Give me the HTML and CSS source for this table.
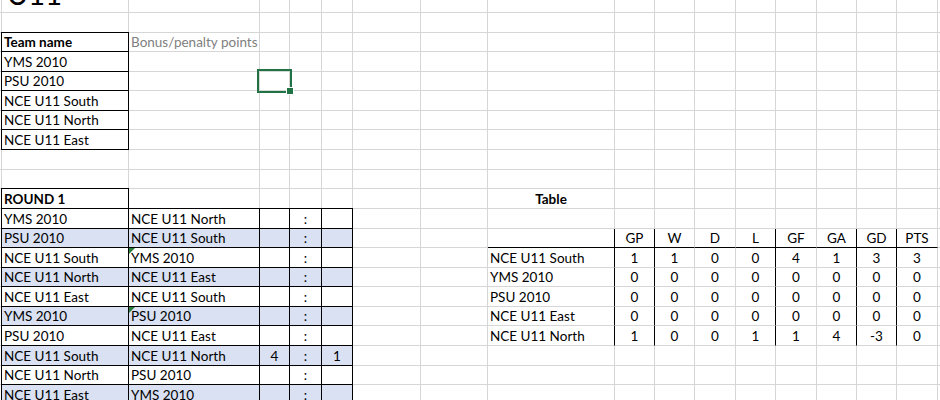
FILE: index.html
```html
<!DOCTYPE html>
<html lang="en">
<head>
<meta charset="utf-8">
<title>U11</title>
<link rel="stylesheet" href="styles.css">
</head>
<body>
<div class="sheet">
<!-- row 1 -->
<div></div><div class="title">U11</div><div></div><div></div><div></div><div></div><div></div><div></div><div></div><div></div><div></div><div></div><div></div><div></div><div></div><div></div><div></div><div></div>
<!-- row 2 -->
<div></div><div></div><div></div><div></div><div></div><div></div><div></div><div></div><div></div><div></div><div></div><div></div><div></div><div></div><div></div><div></div><div></div><div></div>
<!-- row 3 -->
<div></div><div class="bx b">Team name</div><div class="muted">Bonus/penalty points</div><div></div><div></div><div></div><div></div><div></div><div></div><div></div><div></div><div></div><div></div><div></div><div></div><div></div><div></div><div></div>
<!-- row 4 -->
<div></div><div class="bx">YMS 2010</div><div></div><div></div><div></div><div></div><div></div><div></div><div></div><div></div><div></div><div></div><div></div><div></div><div></div><div></div><div></div><div></div>
<!-- row 5 -->
<div></div><div class="bx">PSU 2010</div><div></div><div class="sel"></div><div></div><div></div><div></div><div></div><div></div><div></div><div></div><div></div><div></div><div></div><div></div><div></div><div></div><div></div>
<!-- row 6 -->
<div></div><div class="bx">NCE U11 South</div><div></div><div></div><div></div><div></div><div></div><div></div><div></div><div></div><div></div><div></div><div></div><div></div><div></div><div></div><div></div><div></div>
<!-- row 7 -->
<div></div><div class="bx">NCE U11 North</div><div></div><div></div><div></div><div></div><div></div><div></div><div></div><div></div><div></div><div></div><div></div><div></div><div></div><div></div><div></div><div></div>
<!-- row 8 -->
<div></div><div class="bx">NCE U11 East</div><div></div><div></div><div></div><div></div><div></div><div></div><div></div><div></div><div></div><div></div><div></div><div></div><div></div><div></div><div></div><div></div>
<!-- row 9 -->
<div></div><div></div><div></div><div></div><div></div><div></div><div></div><div></div><div></div><div></div><div></div><div></div><div></div><div></div><div></div><div></div><div></div><div></div>
<!-- row 10 -->
<div></div><div></div><div></div><div></div><div></div><div></div><div></div><div></div><div></div><div></div><div></div><div></div><div></div><div></div><div></div><div></div><div></div><div></div>
<!-- row 11 -->
<div></div><div class="bx b">ROUND 1</div><div></div><div></div><div></div><div></div><div></div><div></div><div class="c b">Table</div><div></div><div></div><div></div><div></div><div></div><div></div><div></div><div></div><div></div>
<!-- row 12 -->
<div></div><div class="bx">YMS 2010</div><div class="bx">NCE U11 North</div><div class="bx"></div><div class="bx c">:</div><div class="bx"></div><div></div><div></div><div></div><div></div><div></div><div></div><div></div><div></div><div></div><div></div><div></div><div></div>
<!-- row 13 -->
<div></div><div class="bx alt">PSU 2010</div><div class="bx alt">NCE U11 South</div><div class="bx alt"></div><div class="bx alt c">:</div><div class="bx alt"></div><div></div><div></div><div class="bb"></div><div class="bl bb c">GP</div><div class="bl bb c">W</div><div class="bb c">D</div><div class="bb c">L</div><div class="bl bb c">GF</div><div class="bb c">GA</div><div class="bl bb c">GD</div><div class="bl bb c">PTS</div><div></div>
<!-- row 14 -->
<div></div><div class="bx">NCE U11 South</div><div class="bx note">YMS 2010</div><div class="bx"></div><div class="bx c">:</div><div class="bx"></div><div></div><div></div><div>NCE U11 South</div><div class="bl c">1</div><div class="bl c">1</div><div class="c">0</div><div class="c">0</div><div class="bl c">4</div><div class="c">1</div><div class="bl c">3</div><div class="bl c">3</div><div></div>
<!-- row 15 -->
<div></div><div class="bx alt">NCE U11 North</div><div class="bx alt">NCE U11 East</div><div class="bx alt"></div><div class="bx alt c">:</div><div class="bx alt"></div><div></div><div></div><div>YMS 2010</div><div class="bl c">0</div><div class="bl c">0</div><div class="c">0</div><div class="c">0</div><div class="bl c">0</div><div class="c">0</div><div class="bl c">0</div><div class="bl c">0</div><div></div>
<!-- row 16 -->
<div></div><div class="bx">NCE U11 East</div><div class="bx">NCE U11 South</div><div class="bx"></div><div class="bx c">:</div><div class="bx"></div><div></div><div></div><div>PSU 2010</div><div class="bl c">0</div><div class="bl c">0</div><div class="c">0</div><div class="c">0</div><div class="bl c">0</div><div class="c">0</div><div class="bl c">0</div><div class="bl c">0</div><div></div>
<!-- row 17 -->
<div></div><div class="bx alt">YMS 2010</div><div class="bx alt note">PSU 2010</div><div class="bx alt"></div><div class="bx alt c">:</div><div class="bx alt"></div><div></div><div></div><div>NCE U11 East</div><div class="bl c">0</div><div class="bl c">0</div><div class="c">0</div><div class="c">0</div><div class="bl c">0</div><div class="c">0</div><div class="bl c">0</div><div class="bl c">0</div><div></div>
<!-- row 18 -->
<div></div><div class="bx">PSU 2010</div><div class="bx">NCE U11 East</div><div class="bx"></div><div class="bx c">:</div><div class="bx"></div><div></div><div></div><div>NCE U11 North</div><div class="bl c">1</div><div class="bl c">0</div><div class="c">0</div><div class="c">1</div><div class="bl c">1</div><div class="c">4</div><div class="bl c">-3</div><div class="bl c">0</div><div></div>
<!-- row 19 -->
<div></div><div class="bx alt">NCE U11 South</div><div class="bx alt">NCE U11 North</div><div class="bx alt c">4</div><div class="bx alt c">:</div><div class="bx alt c">1</div><div></div><div></div><div></div><div></div><div></div><div></div><div></div><div></div><div></div><div></div><div></div><div></div>
<!-- row 20 -->
<div></div><div class="bx">NCE U11 North</div><div class="bx">PSU 2010</div><div class="bx"></div><div class="bx c">:</div><div class="bx"></div><div></div><div></div><div></div><div></div><div></div><div></div><div></div><div></div><div></div><div></div><div></div><div></div>
<!-- row 21 -->
<div></div><div class="bx alt">NCE U11 East</div><div class="bx alt">YMS 2010</div><div class="bx alt"></div><div class="bx alt c">:</div><div class="bx alt"></div><div></div><div></div><div></div><div></div><div></div><div></div><div></div><div></div><div></div><div></div><div></div><div></div>
</div>
</body>
</html>
```
FILE: styles.css
```css
html, body {
  margin: 0;
  background: #fff;
}
body {
  overflow: hidden;
  font-family: Lato, "Open Sans", sans-serif;
  font-size: 13.5px;
  color: #000;
}
.sheet {
  display: grid;
  grid-template-columns: 2px 127px 131px 30px 32px 31px 68px 67px 127px 40px 40px 41px 40px 41px 40px 40px 41px 1fr;
  grid-template-rows: 13px 20px 19px 20px 19px 20px 19px 20px 20px 19px 20px 20px 19px 20px 19px 20px 19px 20px 20px 19px 20px;
}
.sheet > div {
  box-sizing: border-box;
  display: flex;
  align-items: flex-end;
  min-width: 0;
  padding: 0 2px 1px;
  border-right: 1px solid #d6d6d6;
  border-bottom: 1px solid #d6d6d6;
  line-height: 16px;
  white-space: nowrap;
}
.sheet > div:nth-child(18n+1) {
  padding: 0;
}
.sheet > div:nth-child(18n) {
  border-right: 0;
}
.title {
  font-size: 29px;
  line-height: 30px;
  padding-bottom: 10px !important;
  padding-left: 5px !important;
}
.bx {
  margin: -1px 0 0 -1px;
  border: 1px solid #000 !important;
}
.bl {
  margin-left: -1px;
  border-left: 1px solid #000;
}
.sheet > .bb {
  border-bottom-color: #000;
}
.alt {
  background: #d9e1f2;
}
.c {
  justify-content: center;
}
.b {
  font-weight: 700;
}
.muted {
  color: #808080;
}
.note {
  position: relative;
}
.note::before {
  content: "";
  position: absolute;
  left: 0;
  top: 0;
  border-top: 6px solid #2a7d3b;
  border-right: 6px solid transparent;
}
.sel {
  position: relative;
  z-index: 1;
}
.sel::after {
  content: "";
  position: absolute;
  inset: -3px;
  border: 2px solid #217346;
}
.sel::before {
  content: "";
  position: absolute;
  right: -4px;
  bottom: -4px;
  width: 6px;
  height: 6px;
  background: #217346;
  outline: 1px solid #fff;
  z-index: 1;
}
```
